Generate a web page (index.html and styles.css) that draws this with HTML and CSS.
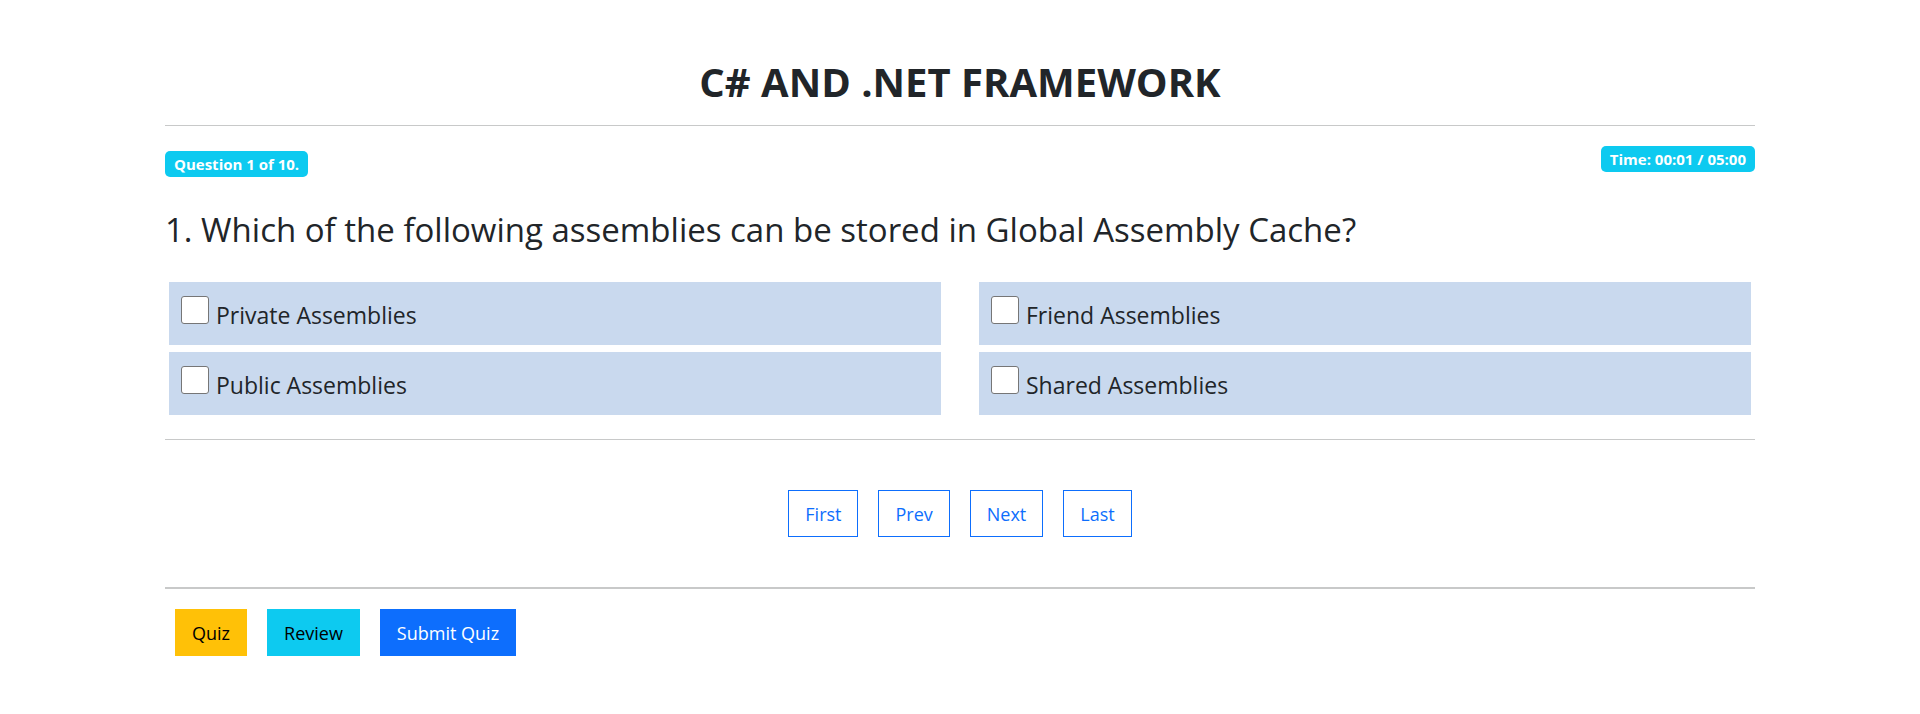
FILE: index.html
```html
<!DOCTYPE html>
<html lang="en">
<head>
<meta charset="utf-8">
<meta name="viewport" content="width=device-width, initial-scale=1">
<title>C# and .NET Framework Quiz</title>
<link rel="stylesheet" href="styles.css">
</head>
<body>
<main class="quiz">
  <h1 class="quiz-title">C# AND .NET FRAMEWORK</h1>
  <hr class="rule">
  <div class="status">
    <span class="badge badge-count">Question 1 of 10.</span>
    <span class="badge">Time: 00:01 / 05:00</span>
  </div>
  <h2 class="question">1. Which of the following assemblies can be stored in Global Assembly Cache?</h2>
  <div class="options">
    <div class="option"><input class="check" type="checkbox" id="opt1"><label for="opt1">Private Assemblies</label></div>
    <div class="option"><input class="check" type="checkbox" id="opt2"><label for="opt2">Friend Assemblies</label></div>
    <div class="option"><input class="check" type="checkbox" id="opt3"><label for="opt3">Public Assemblies</label></div>
    <div class="option"><input class="check" type="checkbox" id="opt4"><label for="opt4">Shared Assemblies</label></div>
  </div>
  <hr class="rule">
  <nav class="pager">
    <button type="button" class="btn btn-outline">First</button>
    <button type="button" class="btn btn-outline">Prev</button>
    <button type="button" class="btn btn-outline">Next</button>
    <button type="button" class="btn btn-outline">Last</button>
  </nav>
  <hr class="rule rule-thick">
  <div class="actions">
    <button type="button" class="btn btn-quiz">Quiz</button>
    <button type="button" class="btn btn-review">Review</button>
    <button type="button" class="btn btn-submit">Submit Quiz</button>
  </div>
</main>
</body>
</html>
```
FILE: styles.css
```css
* {
  box-sizing: border-box;
}

body {
  margin: 0;
  background: #fff;
  color: #212529;
  font-family: "Segoe UI", "Open Sans", "Noto Sans", sans-serif;
}

.quiz {
  max-width: 1590px;
  margin: 0 auto;
  padding: 58px 0;
}

.quiz-title {
  margin: 0 0 19px;
  font-size: 40px;
  line-height: 48px;
  font-weight: 700;
  text-align: center;
}

.rule {
  height: 1px;
  margin: 0;
  border: 0;
  background: #c8c9c9;
}

.rule-thick {
  height: 2px;
}

.status {
  display: flex;
  justify-content: space-between;
  align-items: flex-start;
  padding-top: 20px;
}

.badge {
  padding: 5px 9px;
  border-radius: 5px;
  background: #0dcaf0;
  color: #fff;
  font-size: 15px;
  line-height: 16px;
  font-weight: 700;
}

.badge-count {
  margin-top: 5px;
}

.question {
  margin: 32px 0;
  font-size: 33px;
  line-height: 41px;
  font-weight: 400;
}

.options {
  display: grid;
  grid-template-columns: 1fr 1fr;
  gap: 7px 38px;
  margin: 0 4px 24px;
}

.option {
  display: flex;
  align-items: flex-start;
  gap: 7px;
  padding: 14px 12px 10px;
  background: #c9d9ee;
  font-size: 23px;
  line-height: 39px;
}

.check {
  appearance: none;
  flex: none;
  width: 28px;
  height: 28px;
  margin: 0;
  border: 1px solid #767676;
  border-radius: 3px;
  background: #fff;
}

.check:checked {
  background: #0d6efd;
}

.pager,
.actions {
  display: flex;
  flex-wrap: wrap;
  gap: 20px;
}

.pager {
  justify-content: center;
  padding: 50px 0;
}

.actions {
  padding: 20px 10px 0;
}

.btn {
  padding: 9px 16px 7px;
  border: 1px solid transparent;
  font-family: inherit;
  font-size: 18px;
  line-height: 29px;
  cursor: pointer;
}

.btn-outline {
  background: #fff;
  border-color: #0d6efd;
  color: #0d6efd;
}

.btn-quiz {
  background: #ffc107;
  color: #000;
}

.btn-review {
  background: #0dcaf0;
  color: #000;
}

.btn-submit {
  background: #0d6efd;
  color: #fff;
}

@media (max-width: 1620px) {
  .quiz {
    padding-left: 15px;
    padding-right: 15px;
  }
}

@media (max-width: 700px) {
  .options {
    grid-template-columns: 1fr;
  }
}
```
